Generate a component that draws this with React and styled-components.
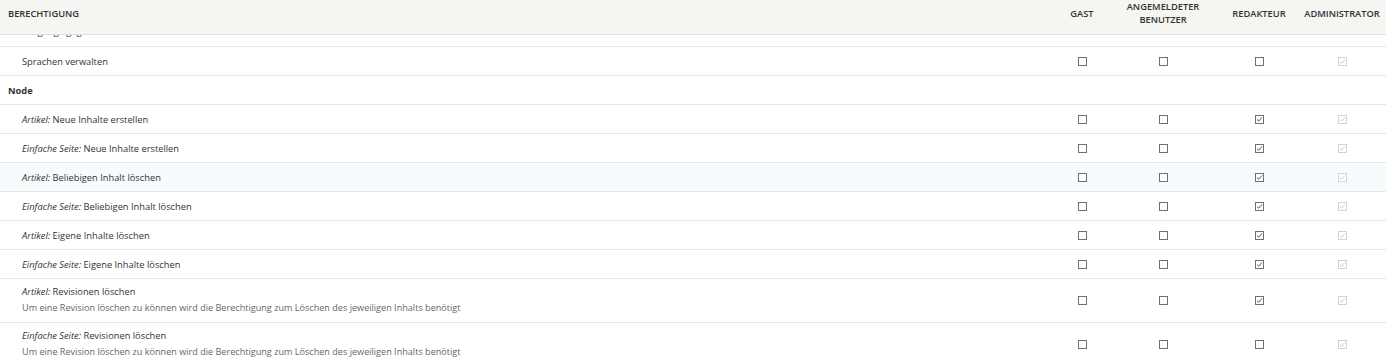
import React from "react";
import styled, { createGlobalStyle } from "styled-components";

const Global = createGlobalStyle`
  body {
    margin: 0;
    background: #fff;
    font-family: "Open Sans", "DejaVu Sans", sans-serif;
    color: #222;
  }
`;

const COLS = "1fr 48px 114px 78px 88px";

const Page = styled.div`
  width: 1386px;
  height: 364px;
  overflow: hidden;
`;

const Head = styled.div`
  display: grid;
  grid-template-columns: ${COLS};
  height: 35px;
  background: #f5f5f2;
  border-bottom: 1px solid #e2e0dc;
  box-sizing: border-box;
  padding-bottom: 8px;
  align-items: center;
`;

const HeadCell = styled.div`
  font-size: 9.3px;
  font-weight: 600;
  text-transform: uppercase;
  line-height: 13px;
  color: #333;
  text-align: ${(p) => (p.$left ? "left" : "center")};
  padding-left: ${(p) => (p.$left ? "8px" : "0")};
`;

const Row = styled.div`
  display: grid;
  grid-template-columns: ${COLS};
  align-items: center;
  min-height: 28px;
  border-bottom: 1px solid #e8e6e2;
  background: ${(p) => (p.$hl ? "#f6fbfe" : "#fff")};
`;

const Clip = styled.div`
  height: 11px;
  overflow: hidden;
  border-bottom: 1px solid #e8e6e2;
`;

const Shifted = styled.div`
  margin-top: -18px;
`;

const Label = styled.div`
  padding: ${(p) => (p.$desc ? "6px 0 8px 22px" : "0 0 0 22px")};
  font-size: 9.3px;
  line-height: 13px;
  color: #333;
`;

const Module = styled.div`
  padding-left: 8px;
  font-size: 9.3px;
  font-weight: 700;
  color: #333;
`;

const Desc = styled.div`
  margin-top: 3px;
  font-size: 9.1px;
  color: #666;
`;

const Cell = styled.div`
  display: flex;
  justify-content: center;
`;

const Box = styled.span`
  width: 9px;
  height: 9px;
  box-sizing: border-box;
  border: 1px solid ${(p) => (p.$disabled ? "#d4d4d4" : "#707070")};
  background: #fff;
  display: flex;
  align-items: center;
  justify-content: center;
`;

const Check = ({ checked, disabled }) => (
  <Box $disabled={disabled}>
    {checked && (
      <svg width="7" height="7" viewBox="0 0 7 7">
        <path
          d="M1 3.6 L2.8 5.2 L6 1.4"
          fill="none"
          stroke={disabled ? "#c8c8c8" : "#444"}
          strokeWidth="0.9"
        />
      </svg>
    )}
  </Box>
);

const Boxes = ({ red }) => (
  <>
    <Cell><Check /></Cell>
    <Cell><Check /></Cell>
    <Cell><Check checked={red} /></Cell>
    <Cell><Check checked disabled /></Cell>
  </>
);

const desc =
  "Um eine Revision löschen zu können wird die Berechtigung zum Löschen des jeweiligen Inhalts benötigt";

const perms = [
  { type: "Artikel", text: "Neue Inhalte erstellen" },
  { type: "Einfache Seite", text: "Neue Inhalte erstellen" },
  { type: "Artikel", text: "Beliebigen Inhalt löschen", hl: true },
  { type: "Einfache Seite", text: "Beliebigen Inhalt löschen" },
  { type: "Artikel", text: "Eigene Inhalte löschen" },
  { type: "Einfache Seite", text: "Eigene Inhalte löschen" },
  { type: "Artikel", text: "Revisionen löschen", desc },
  { type: "Einfache Seite", text: "Revisionen löschen", desc, red: false },
];

export default function App() {
  return (
    <Page>
      <Global />
      <Head>
        <HeadCell $left>Berechtigung</HeadCell>
        <HeadCell>Gast</HeadCell>
        <HeadCell>Angemeldeter<br />Benutzer</HeadCell>
        <HeadCell>Redakteur</HeadCell>
        <HeadCell>Administrator</HeadCell>
      </Head>
      <Clip>
        <Shifted>
          <Row style={{ borderBottom: "none" }}>
            <Label>Language gegliedert</Label>
          </Row>
        </Shifted>
      </Clip>
      <Row>
        <Label>Sprachen verwalten</Label>
        <Boxes red={false} />
      </Row>
      <Row>
        <Module>Node</Module>
      </Row>
      {perms.map((p, i) => (
        <Row key={i} $hl={p.hl}>
          <Label $desc={!!p.desc}>
            <i>{p.type}:</i> {p.text}
            {p.desc && <Desc>{p.desc}</Desc>}
          </Label>
          <Boxes red={p.red !== false} />
        </Row>
      ))}
    </Page>
  );
}
